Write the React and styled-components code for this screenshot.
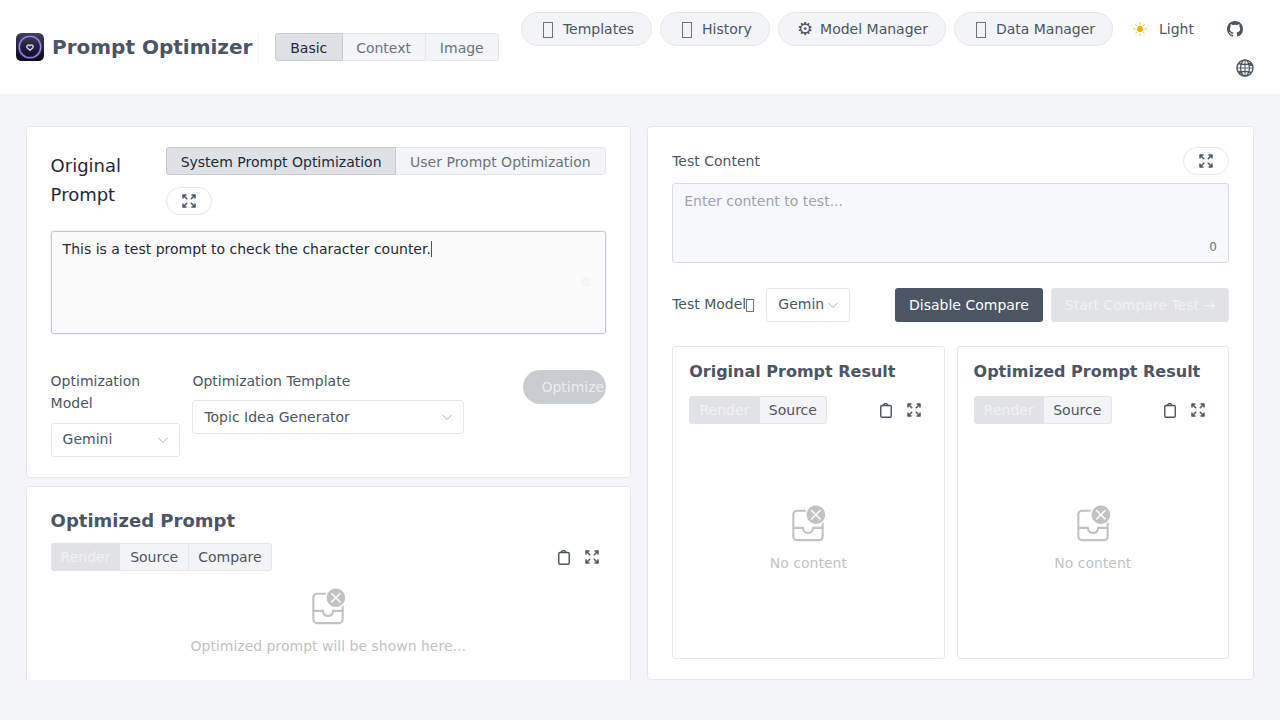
import React from "react";
import styled, { createGlobalStyle } from "styled-components";

const Global = createGlobalStyle`
  *, *::before, *::after { box-sizing: border-box; }
  html, body { margin: 0; padding: 0; }
  body {
    height: 720px;
    overflow: hidden;
    background: #f4f5f7;
    color: #4b5563;
    font: 14px/1.6 "DejaVu Sans", sans-serif;
  }
  button { font: inherit; color: inherit; }
`;

const Page = styled.div`
  height: 720px;
  display: flex;
  flex-direction: column;
`;

const Header = styled.header`
  height: 94px;
  flex: none;
  display: flex;
  align-items: center;
  justify-content: space-between;
  padding: 0 26px 0 16px;
  background: #fff;
`;

const Brand = styled.div`
  display: flex;
  align-items: center;
`;

const BrandTitle = styled.h1`
  margin: 0 0 0 8px;
  width: 206px;
  font-size: 20px;
  line-height: 32px;
  white-space: nowrap;
`;

const Divider = styled.span`
  width: 1px;
  height: 32px;
  margin-right: 16px;
  background: #f3f4f6;
`;

const Segments = styled.div`
  display: flex;
  height: 28px;
`;

const tones = {
  active: "background:#dee1e6;color:#1f2937;border-color:#c5cad2;",
  idle: "background:#f3f4f6;color:#6b7280;border-color:#e5e7eb;",
  plain: "background:#f3f4f6;color:#4b5563;border-color:#e5e7eb;",
  muted: "background:#e1e2e6;color:#f0f1f3;border-color:#e1e2e6;",
};

const Segment = styled.button`
  width: ${(p) => p.$w}px;
  flex: none;
  height: 28px;
  padding: ${(p) => (p.$tone === "active" || p.$tone === "idle" ? "1px 0 0" : "0 0 1px")};
  line-height: 24px;
  text-align: center;
  white-space: nowrap;
  border: 1px solid;
  ${(p) => tones[p.$tone]}
  border-left-width: ${(p) => (p.$first ? 1 : 0)}px;
  border-radius: ${(p) => (p.$first ? "3px 0 0 3px" : p.$last ? "0 3px 3px 0" : "0")};
`;

const Nav = styled.nav`
  width: 733px;
  height: 94px;
  display: flex;
  flex-direction: column;
  align-items: flex-end;
  padding-top: 12px;
`;

const NavRow = styled.div`
  width: 733px;
  display: flex;
  align-items: center;
  gap: 8px;
`;

const NavButton = styled.button`
  width: ${(p) => p.$w}px;
  height: 34px;
  display: flex;
  align-items: center;
  justify-content: center;
  gap: 6px;
  padding: 0;
  border: 1px solid #e5e7eb;
  border-radius: 17px;
  background: #f3f4f6;
  white-space: nowrap;
`;

const Glyph = styled.span`
  width: 18px;
  display: flex;
  justify-content: center;
  font-size: 18px;
  line-height: 18px;
`;

const MissingGlyph = styled.span`
  width: ${(p) => p.$w}px;
  height: ${(p) => p.$h}px;
  margin-top: ${(p) => p.$mt}px;
  border: 1px solid #6b7280;
`;

const ThemeButton = styled.button`
  display: flex;
  align-items: center;
  gap: 10px;
  margin-left: 10px;
  padding: 0;
  border: 0;
  background: none;
`;

const GithubLink = styled.span`
  display: flex;
  margin-left: 25px;
`;

const GlobeButton = styled.span`
  display: flex;
  margin: 13px 0 0;
`;

const Main = styled.main`
  height: 586px;
  display: grid;
  grid-template-columns: 605.200px 606.800px;
  gap: 16.400px;
  padding: 32px 25px 0 25.600px;
  overflow: hidden;
`;

const Column = styled.div`
  height: 554px;
  display: flex;
  flex-direction: column;
  gap: 8px;
  overflow: hidden;
`;

const Card = styled.section`
  height: ${(p) => p.$h}px;
  flex: none;
  border: 1px solid #e5e7eb;
  border-radius: 4px;
  background: #fff;
  padding: 20px 24px;
`;

const Row = styled.div`
  display: flex;
  align-items: ${(p) => p.$align || "center"};
  justify-content: space-between;
`;

const FieldTitle = styled.div`
  width: 104px;
  padding-top: 5px;
  font-size: 18px;
  line-height: 28.8px;
  color: #1f2937;
`;

const PromptTools = styled.div`
  width: 439.600px;
  display: flex;
  flex-direction: column;
  gap: 12px;
`;

const PillButton = styled.button`
  width: 46px;
  height: 28px;
  display: flex;
  align-items: center;
  justify-content: center;
  padding: 0;
  border: 1px solid #e5e7eb;
  border-radius: 14px;
  background: #fff;
`;

const TextBox = styled.div`
  height: ${(p) => p.$h}px;
  margin-top: ${(p) => p.$mt}px;
  position: relative;
  padding: 6px 11px;
  border: 1px solid ${(p) => (p.$focused ? "#c3c8d0" : "#d8dce2")};
  border-radius: 3px;
  background: ${(p) => (p.$focused ? "#fbfbfb" : "#f7f8fa")};
  color: ${(p) => (p.$focused ? "#1f2937" : "#9ca3af")};
  box-shadow: ${(p) => (p.$focused ? "0 0 0 1px #f3f4f6" : "none")};
`;

const Caret = styled.span`
  display: inline-block;
  width: 1px;
  height: 16px;
  vertical-align: -3px;
  background: #4b5563;
`;

const Counter = styled.span`
  position: absolute;
  right: 11px;
  bottom: 5px;
  font-size: 12px;
  line-height: 19px;
  color: #6b7280;
`;

const ClearDot = styled.span`
  position: absolute;
  right: 14px;
  top: 45px;
  width: 10px;
  height: 10px;
  border: 4px solid #f4f5f6;
  border-radius: 50%;
`;

const Controls = styled.div`
  display: flex;
  align-items: flex-start;
  margin-top: 36px;
`;

const Field = styled.div`
  width: ${(p) => p.$w}px;
  margin-right: ${(p) => p.$mr || 0}px;
`;

const FieldLabel = styled.div`
  line-height: 22px;
  margin-bottom: ${(p) => p.$mb}px;
`;

const Select = styled.div`
  width: ${(p) => p.$w};
  height: 34px;
  flex: none;
  display: flex;
  align-items: center;
  padding: 0 8px 0 11px;
  border: 1px solid #e5e7eb;
  border-radius: 3px;
  background: #fff;
`;

const SelectValue = styled.span`
  flex: 1;
  min-width: 0;
  white-space: nowrap;
  line-height: 30px;
  padding-bottom: ${(p) => (p.$low ? 0 : 2)}px;
`;

const OptimizeButton = styled.button`
  width: 83px;
  height: 34px;
  margin-left: auto;
  padding: 0 0 0 18.600px;
  border: 0;
  border-radius: 17px;
  background: #c9ccd1;
  color: rgba(255, 255, 255, 0.62);
  text-align: left;
  white-space: nowrap;
`;

const CardTitle = styled.h2`
  margin: 0;
  font-size: ${(p) => p.$size}px;
  line-height: ${(p) => p.$lh}px;
  white-space: nowrap;
`;

const ViewBar = styled.div`
  display: flex;
  align-items: center;
  justify-content: space-between;
  margin-top: ${(p) => p.$mt}px;
`;

const Actions = styled.div`
  display: flex;
  gap: 10px;
  padding-right: 5px;
`;

const Empty = styled.div`
  display: flex;
  flex-direction: column;
  align-items: center;
  gap: 8px;
  margin-top: ${(p) => p.$mt}px;
  color: #c2c2c2;
  line-height: 22px;
`;

const TestBar = styled.div`
  height: 34px;
  display: flex;
  align-items: center;
  margin-top: 25px;
`;

const ModelLabel = styled.div`
  width: 94.200px;
  display: flex;
  align-items: center;
  padding-bottom: 2px;
`;

const ActionButton = styled.button`
  width: ${(p) => p.$w}px;
  height: 34px;
  margin-left: ${(p) => p.$ml};
  padding: 0;
  border: 0;
  border-radius: 3px;
  background: ${(p) => (p.$disabled ? "#e1e2e6" : "#4b5563")};
  color: ${(p) => (p.$disabled ? "#f0f1f3" : "#fff")};
  white-space: nowrap;
`;

const Results = styled.div`
  display: grid;
  grid-template-columns: 1fr 1fr;
  gap: 12px;
  margin-top: 24px;
`;

const ResultCard = styled.article`
  height: 313px;
  padding: 12px 16px;
  border: 1px solid #e5e7eb;
  border-radius: 3px;
`;

const Expand = () => (
  <svg width="18" height="18" viewBox="0 0 24 24" fill="none" stroke="currentColor" strokeWidth="2" strokeLinecap="round" strokeLinejoin="round">
    <path d="M4 8V4m0 0h4M4 4l5 5m11-1V4m0 0h-4m4 0l-5 5M4 16v4m0 0h4m-4 0l5-5m11 5l-5-5m5 5v-4m0 4h-4" />
  </svg>
);

const Clipboard = () => (
  <svg width="18" height="18" viewBox="0 0 24 24" fill="none" stroke="currentColor" strokeWidth="1.900" strokeLinecap="round" strokeLinejoin="round">
    <rect x="5" y="6" width="14" height="15.700" rx="1.600" />
    <path d="M8.200 6l2-2.500h2.600L14.800 6" />
  </svg>
);

const Chevron = () => (
  <svg width="16" height="16" viewBox="0 0 16 16" fill="#c2c2c2">
    <path d="M3.146 5.646a.5.5 0 0 1 .708 0L8 9.793l4.146-4.147a.5.5 0 0 1 .708.708l-4.500 4.500a.5.5 0 0 1-.708 0l-4.500-4.500a.5.5 0 0 1 0-.708Z" />
  </svg>
);

const Sun = () => (
  <svg width="18" height="18" viewBox="0 0 24 24" fill="#eab308" stroke="#eab308" strokeLinecap="round">
    <circle cx="12" cy="12" r="3.900" strokeWidth=".4" />
    <path fill="none" strokeWidth="1.300" d="M12 4v1.600m5.700.7-1.200 1.200M20 12h-1.600m-.7 5.700-1.200-1.200M12 18.400V20m-4.500-3.500-1.200 1.200M5.600 12H4m3.500-4.500L6.300 6.300" />
  </svg>
);

const Github = () => (
  <svg width="16" height="16" viewBox="0 0 16 16" fill="currentColor">
    <path d="M8 0C3.58 0 0 3.58 0 8c0 3.540 2.290 6.530 5.470 7.590.4.070.55-.17.55-.38 0-.19-.01-.82-.01-1.490-2.010.37-2.530-.49-2.690-.94-.09-.23-.48-.94-.82-1.130-.28-.15-.68-.52-.01-.53.63-.01 1.080.58 1.230.82.72 1.210 1.870.87 2.330.66.070-.52.28-.87.51-1.070-1.780-.2-3.640-.89-3.640-3.950 0-.87.31-1.590.82-2.150-.08-.2-.36-1.020.080-2.120 0 0 .67-.21 2.200.82.64-.18 1.320-.27 2-.27s1.360.090 2 .27c1.530-1.040 2.200-.82 2.200-.82.44 1.100.16 1.920.080 2.120.51.56.82 1.270.82 2.150 0 3.070-1.870 3.750-3.650 3.950.29.25.54.73.54 1.480 0 1.070-.01 1.930-.01 2.200 0 .21.15.46.55.38A8.010 8.010 0 0 0 16 8c0-4.420-3.580-8-8-8z" />
  </svg>
);

const Globe = () => (
  <svg width="18" height="18" viewBox="0 0 18 18" fill="none" stroke="currentColor" strokeWidth="1.400">
    <circle cx="9" cy="9" r="8" />
    <ellipse cx="9" cy="9" rx="4.400" ry="8" strokeWidth="1.200" />
    <path d="M9 1v16M1 9h16" strokeWidth=".9" />
    <path d="M2.500 4.500c3.500 1.100 9.500 1.100 13 0M2.500 13.500c3.500-1.100 9.500-1.100 13 0" />
    <path d="M12.300 5l2.700-.8 1.500 2.500-2.600.4zM2 11.500l3.200.8.7 2.500-2.400-.6z" fill="currentColor" stroke="none" />
  </svg>
);

const Inbox = () => (
  <svg width="40" height="40" viewBox="0 0 28 28" fill="currentColor">
    <path d="M26 7.500C26 11.090 23.090 14 19.500 14S13 11.090 13 7.500 15.910 1 19.500 1 26 3.910 26 7.500ZM16.854 4.146a.5.5 0 0 0-.708.708L18.793 7.500l-2.647 2.646a.5.5 0 0 0 .708.708L19.500 8.207l2.646 2.647a.5.5 0 0 0 .708-.708L20.207 7.500l2.647-2.646a.5.5 0 0 0-.708-.708L19.500 6.793l-2.646-2.647Z" />
    <path d="M25 22.750V12.599a7.500 7.500 0 0 1-1.500 1.246V16h-6a.75.75 0 0 0-.75.75 2.750 2.750 0 0 1-5.500 0 .75.75 0 0 0-.75-.75h-6V7.250c0-.966.784-1.750 1.750-1.750h6.020c.145-.525.345-1.028.595-1.500H6.250A3.250 3.250 0 0 0 3 7.250v15.500A3.250 3.250 0 0 0 6.250 26h15.500A3.250 3.250 0 0 0 25 22.750ZM4.500 22.750V17.500h5.316a4.251 4.251 0 0 0 8.368 0H23.500v5.250a1.750 1.750 0 0 1-1.750 1.750H6.250a1.750 1.750 0 0 1-1.750-1.750Z" />
  </svg>
);

const Logo = () => (
  <svg width="28" height="28" viewBox="0 0 28 28" fill="none">
    <defs>
      <linearGradient id="logoBg" x1="0" y1="0" x2="0" y2="1">
        <stop offset="0" stopColor="#414252" />
        <stop offset=".5" stopColor="#20203a" />
        <stop offset="1" stopColor="#090b1a" />
      </linearGradient>
    </defs>
    <rect width="28" height="28" rx="5.500" fill="url(#logoBg)" />
    <circle cx="14" cy="14" r="10.800" stroke="#6546ba" strokeWidth="2.600" opacity=".65" />
    <circle cx="14" cy="14" r="10.800" stroke="#a48ae6" strokeWidth="1.100" />
    <path d="M14 17.200l-2.800-2.500a1.700 1.700 0 0 1 2.200-2.500l.6.600.6-.6a1.700 1.700 0 0 1 2.200 2.500z" stroke="#d9c9ff" strokeWidth="1.500" />
  </svg>
);

const navItems = [
  { label: "Templates", w: 131 },
  { label: "History", w: 110 },
  { icon: "⚙", label: "Model Manager", w: 168 },
  { label: "Data Manager", w: 159 },
];

function SegmentGroup({ items }) {
  return (
    <Segments>
      {items.map(([label, w, tone], i) => (
        <Segment key={label} $w={w} $tone={tone} $first={i === 0} $last={i === items.length - 1}>
          {label}
        </Segment>
      ))}
    </Segments>
  );
}

function Result({ title }) {
  return (
    <ResultCard>
      <CardTitle $size={16} $lh={26}>{title}</CardTitle>
      <ViewBar $mt={11}>
        <SegmentGroup items={[["Render", 70.4, "muted"], ["Source", 67.6, "plain"]]} />
        <Actions><Clipboard /><Expand /></Actions>
      </ViewBar>
      <Empty $mt={80}><Inbox /><span>No content</span></Empty>
    </ResultCard>
  );
}

export default function App() {
  return (
    <Page>
      <Global />
      <Header>
        <Brand>
          <Logo />
          <BrandTitle>Prompt Optimizer</BrandTitle>
          <Divider />
          <SegmentGroup items={[["Basic", 67.6, "active"], ["Context", 83, "idle"], ["Image", 73.4, "idle"]]} />
        </Brand>
        <Nav>
          <NavRow>
            {navItems.map((n) => (
              <NavButton key={n.label} $w={n.w}>
                <Glyph>{n.icon || <MissingGlyph $w={10} $h={16} $mt={2} />}</Glyph>
                {n.label}
              </NavButton>
            ))}
            <ThemeButton><Sun />Light</ThemeButton>
            <GithubLink><Github /></GithubLink>
          </NavRow>
          <GlobeButton><Globe /></GlobeButton>
        </Nav>
      </Header>
      <Main>
        <Column>
          <Card $h={352}>
            <Row $align="flex-start">
              <FieldTitle>Original Prompt</FieldTitle>
              <PromptTools>
                <SegmentGroup
                  items={[["System Prompt Optimization", 229.8, "active"], ["User Prompt Optimization", 209.8, "idle"]]}
                />
                <PillButton><Expand /></PillButton>
              </PromptTools>
            </Row>
            <TextBox $h={103} $mt={16} $focused>
              This is a test prompt to check the character counter.<Caret />
              <ClearDot />
            </TextBox>
            <Controls>
              <Field $w={129.4} $mr={12.4}>
                <FieldLabel $mb={9}>Optimization Model</FieldLabel>
                <Select $w="129.4px"><SelectValue>Gemini</SelectValue><Chevron /></Select>
              </Field>
              <Field $w={271.6}>
                <FieldLabel $mb={8}>Optimization Template</FieldLabel>
                <Select $w="271.6px"><SelectValue $low>Topic Idea Generator</SelectValue><Chevron /></Select>
              </Field>
              <OptimizeButton>Optimize →</OptimizeButton>
            </Controls>
          </Card>
          <Card $h={220}>
            <CardTitle $size={18} $lh={28}>Optimized Prompt</CardTitle>
            <ViewBar $mt={8}>
              <SegmentGroup
                items={[["Render", 69.9, "muted"], ["Source", 68.4, "plain"], ["Compare", 83.1, "plain"]]}
              />
              <Actions><Clipboard /><Expand /></Actions>
            </ViewBar>
            <Empty $mt={16}><Inbox /><span>Optimized prompt will be shown here...</span></Empty>
          </Card>
        </Column>
        <Card $h={554}>
          <Row>
            <span>Test Content</span>
            <PillButton><Expand /></PillButton>
          </Row>
          <TextBox $h={80} $mt={8}>
            Enter content to test...
            <Counter>0</Counter>
          </TextBox>
          <TestBar>
            <ModelLabel>Test Model<MissingGlyph $w={8} $h={13} $mt={3} /></ModelLabel>
            <Select $w="84px"><SelectValue>Gemin</SelectValue><Chevron /></Select>
            <ActionButton $w={148} $ml="auto">Disable Compare</ActionButton>
            <ActionButton $w={178} $ml="8px" $disabled>Start Compare Test →</ActionButton>
          </TestBar>
          <Results>
            <Result title="Original Prompt Result" />
            <Result title="Optimized Prompt Result" />
          </Results>
        </Card>
      </Main>
    </Page>
  );
}
